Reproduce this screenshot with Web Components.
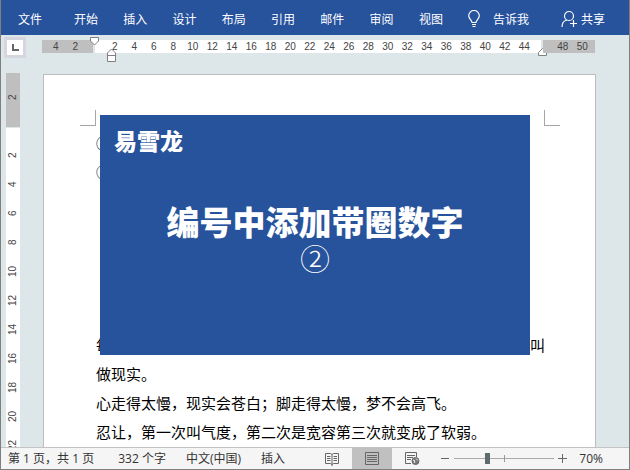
<!DOCTYPE html>
<html lang="zh-CN">
<head>
<meta charset="utf-8">
<title>Word</title>
<style>
html,body{height:100%;margin:0}
body{font-family:"Liberation Sans","Noto Sans CJK SC",sans-serif;overflow:hidden}
</style>
</head>
<body>
<word-window>
  <ribbon-bar slot="top"></ribbon-bar>
  <top-ruler slot="ruler"></top-ruler>
  <side-ruler slot="side"></side-ruler>
  <doc-page slot="page">
    <p>①</p>
    <p>②</p>
    <p class="gap"></p>
    <p class="split"><span>每</span><span>叫</span></p>
    <p>做现实。</p>
    <p>心走得太慢，现实会苍白；脚走得太慢，梦不会高飞。</p>
    <p>忍让，第一次叫气度，第二次是宽容第三次就变成了软弱。</p>
    <title-card slot="cover" brand="易雪龙" mark="②">编号中添加带圈数字</title-card>
  </doc-page>
  <status-bar slot="status"></status-bar>
</word-window>
<script>
function define(name, html, setup) {
  const t = document.createElement('template');
  t.innerHTML = html;
  customElements.define(name, class extends HTMLElement {
    constructor() {
      super();
      this.attachShadow({mode: 'open'}).append(t.content.cloneNode(true));
    }
    connectedCallback() { if (setup) setup(this, this.shadowRoot); }
  });
}
const range = (a, b) => { const r = []; for (let i = a; i <= b; i += 2) r.push(`<span>${i}</span>`); return r.join(''); };

define('word-window', `<style>
:host{display:grid;grid-template-rows:auto auto minmax(0,1fr) auto;height:100%;box-sizing:border-box;border:1px solid #7f7f7f;border-top:0;background:#dde6e8}
.work{display:grid;grid-template-columns:14px minmax(0,1fr);gap:23px;padding:0 33px 0 5px;min-height:0;overflow:hidden}
</style>
<slot name="top"></slot><slot name="ruler"></slot>
<div class="work"><slot name="side"></slot><slot name="page"></slot></div>
<slot name="status"></slot>`);

define('ribbon-bar', `<style>
:host{display:flex;align-items:center;height:35px;background:#27529c;color:#fff;padding:2px 24px 0 17px;box-sizing:border-box}
button{all:unset;font:12px/20px "Noto Sans CJK SC",sans-serif;display:flex;align-items:center;white-space:nowrap}
nav{display:flex;flex:1;justify-content:space-between;margin:0 24px 0 32px}
.tell{gap:12px}.share{gap:4px;margin-left:32px}
svg{display:block;fill:none;stroke:#fff;stroke-width:1.2}
</style>
<button>文件</button>
<nav><button>开始</button><button>插入</button><button>设计</button><button>布局</button><button>引用</button><button>邮件</button><button>审阅</button><button>视图</button></nav>
<button class="tell"><svg width="14" height="18" viewBox="0 0 14 18"><path d="M5 12.5C5 10 1.7 9 1.7 5.800A5.300 5.300 0 0 1 12.300 5.800C12.300 9 9 10 9 12.500ZM5 14.500H9M5.500 16.500H8.500"/></svg>告诉我</button>
<button class="share"><svg width="16" height="18" viewBox="0 0 16 18"><circle cx="8" cy="6" r="4.500"/><path d="M1 17C1 13 3.500 10.500 6 10M12.500 10V17M9 13.500H16"/></svg>共享</button>`);

define('top-ruler', `<style>
:host{display:grid;grid-template-columns:38px 51fr 2px 446fr 2px 52fr;padding:5px 34px 0 3px;height:38px;box-sizing:border-box;font:10px/13px "Liberation Sans",sans-serif;color:#444}
.tab{all:unset;box-sizing:border-box;width:22px;height:21px;margin-top:-3px;border:3px solid #d5d6e0;background:#fff;display:grid;place-items:center}
.seg{box-sizing:border-box;min-width:0;display:grid;grid-auto-flow:column;grid-auto-columns:1fr;text-align:center;height:13px;position:relative;background:#fff}
.seg span{display:block}
.l{grid-column:2;background:#bfbfbf;padding:0 8px 0 4px}
.m{grid-column:4;padding:0 7px 0 10px}
.r{grid-column:6;background:#bfbfbf;padding:0 3px 0 10px}
svg{display:block;fill:#fff;stroke:#7f7f7f}
.seg svg{position:absolute}
.a{left:-5px;top:-3px}.b{left:12px;top:8px}.c{right:-7px;top:8px}
</style>
<button class="tab" aria-label="制表符"><svg width="8" height="8" viewBox="0 0 8 8"><path d="M2 0V6H8" style="fill:none;stroke:#666;stroke-width:2"/></svg></button>
<div class="seg l"><span>4</span><span>2</span></div>
<div class="seg m">${range(2,44)}
<svg class="a" width="10" height="9" viewBox="0 0 10 9"><path d="M.5 .5H8.500V4L4.500 8L.5 4Z"/></svg>
<svg class="b" width="10" height="15" viewBox="0 0 10 15"><path d="M.5 13.500V5L4.500 1L8.500 5V13.500ZM.5 7.500H8.500"/></svg>
<svg class="c" width="10" height="9" viewBox="0 0 10 9"><path d="M.5 7.500V4.500L4.500 .5L8.500 4.500V7.500Z"/></svg></div>
<div class="seg r"><span>48</span><span>50</span></div>`);

define('side-ruler', `<style>
:host{display:flex;flex-direction:column;gap:1px;font:10px/14px "Liberation Sans",sans-serif;color:#444;overflow:hidden;min-height:0}
div{background:#fff;display:flex;flex-direction:column}
.g{background:#bfbfbf;height:54px;flex:none;justify-content:center}
.g span{margin-top:-5px}
.w{padding-top:13px}
span{display:block;height:29px;width:14px;flex:none;writing-mode:vertical-rl;transform:rotate(180deg);text-align:center}
</style>
<div class="g"><span>2</span></div><div class="w">${range(2,22)}</div>`);

define('doc-page', `<style>
:host{display:block;position:relative;box-sizing:border-box;background:#fff;border:1px solid #bdbdbd;border-bottom:0;margin-top:1px;padding:53px 50px 0 52px;font:15px/29px "Noto Sans CJK SC",sans-serif;color:#000;overflow:hidden;min-height:0}
::slotted(p){margin:0;white-space:nowrap}
::slotted(p.gap){height:144px}
::slotted(p.split){display:flex;justify-content:space-between}
i{position:absolute;width:15px;height:15px;top:35px;border:0 solid #a6a6a6;border-bottom-width:1px}
.tl{left:36px;border-right-width:1px}.tr{right:35px;border-left-width:1px}
.cover{position:absolute;left:56px;right:65px;top:40px;height:240px}
</style>
<i class="tl"></i><i class="tr"></i><slot></slot><div class="cover"><slot name="cover"></slot></div>`);

define('title-card', `<style>
:host{display:flex;flex-direction:column;height:100%;box-sizing:border-box;background:#27529c;color:#fff;padding:13px 14px;font-family:"Liberation Sans","Noto Sans CJK SC",sans-serif;font-weight:900}
.brand{font-size:23px;line-height:28px}
h1{margin:50px 0 0;font-size:33px;font-weight:900;line-height:36px;text-align:center;white-space:nowrap}
.mark{font:300 30px/36px "Liberation Serif","Noto Sans CJK SC",serif;text-align:center}
</style>
<div class="brand"></div><h1><slot></slot></h1><div class="mark"></div>`, (el, r) => {
  r.querySelector('.brand').textContent = el.getAttribute('brand');
  r.querySelector('.mark').textContent = el.getAttribute('mark');
});

define('status-bar', `<style>
:host{display:flex;align-items:center;height:22px;background:#f5f5f5;border-top:1px solid #c3c3c3;box-sizing:border-box;padding:0 26px 0 7px;font:12px/20px "Open Sans","Noto Sans CJK SC",sans-serif;color:#333;white-space:nowrap}
span{margin-right:20px}
span:first-of-type{margin-right:24px}
button{all:unset;display:grid;place-items:center;width:40px;height:21px}
.views{display:flex;margin-left:auto}
.on{background:#c0c0c0}
svg{display:block;fill:none;stroke:#666}
.zoom{display:flex;align-items:center;margin-left:5px}
.zoom button{width:16px}
input{appearance:none;margin:0 0 0 1px;width:100px;height:13px;background:linear-gradient(#999,#999) 50% 3px/1px 7px no-repeat,linear-gradient(#aaa,#aaa) 0 6px/100% 1px no-repeat}
input::-webkit-slider-thumb{appearance:none;width:5px;height:11px;background:#5f6b6b}
output{margin-left:9px}
</style>
<span>第 1 页，共 1 页</span><span>332 个字</span><span>中文(中国)</span><span>插入</span>
<div class="views">
<button aria-label="阅读视图"><svg width="14" height="14" viewBox="0 0 14 14"><path d="M7 2.500L5.500 1.500H.5V11.500H5.500L7 12.500L8.500 11.500H13.500V1.500H8.500L7 2.500V14M2 4.500H5.500M2 6.500H5.500M2 8.500H5.500M8.500 4.500H12M8.500 6.500H12M8.500 8.500H12"/></svg></button>
<button class="on" aria-label="页面视图"><svg width="14" height="14" viewBox="0 0 14 14"><path d="M.5 .5H13.500V12.500H.5ZM2 3.500H12M2 5.500H12M2 7.500H12M2 9.500H12"/></svg></button>
<button aria-label="Web 版式视图"><svg width="15" height="14" viewBox="0 0 15 14"><path d="M6 11.500H.5V.5H11.500V5M2 3.500H10M2 5.500H8M2 7.500H6"/><circle cx="10.500" cy="9" r="3.500" fill="#777"/><path d="M8 8L10 9L9 11M11 6.500L13 8.500" stroke="#f5f5f5"/></svg></button>
</div>
<div class="zoom"><button aria-label="缩小"><svg width="9" height="9"><path d="M0 4.500H8"/></svg></button><input type="range" min="10" max="190" value="69" aria-label="缩放"><button aria-label="放大"><svg width="9" height="9"><path d="M0 4.500H9M4.500 0V9"/></svg></button><output>70%</output></div>`);
</script>
</body>
</html>
